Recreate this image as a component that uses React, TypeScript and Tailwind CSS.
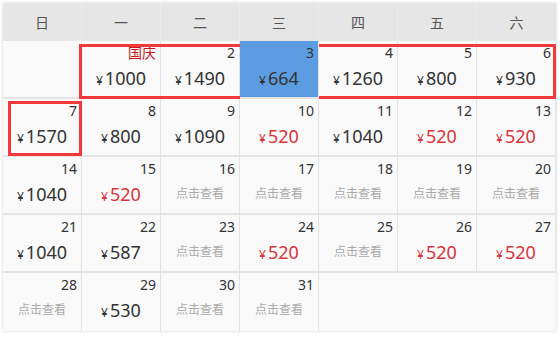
import React from 'react'

type Day = { d: number; label?: string; price?: number; low?: boolean; sel?: boolean }

const weekNames = ['日', '一', '二', '三', '四', '五', '六']

const days: Day[] = [
  { d: 1, label: '国庆', price: 1000 },
  { d: 2, price: 1490 },
  { d: 3, price: 664, sel: true },
  { d: 4, price: 1260 },
  { d: 5, price: 800 },
  { d: 6, price: 930 },
  { d: 7, price: 1570 },
  { d: 8, price: 800 },
  { d: 9, price: 1090 },
  { d: 10, price: 520, low: true },
  { d: 11, price: 1040 },
  { d: 12, price: 520, low: true },
  { d: 13, price: 520, low: true },
  { d: 14, price: 1040 },
  { d: 15, price: 520, low: true },
  { d: 16 },
  { d: 17 },
  { d: 18 },
  { d: 19 },
  { d: 20 },
  { d: 21, price: 1040 },
  { d: 22, price: 587 },
  { d: 23 },
  { d: 24, price: 520, low: true },
  { d: 25 },
  { d: 26, price: 520, low: true },
  { d: 27, price: 520, low: true },
  { d: 28 },
  { d: 29, price: 530 },
  { d: 30 },
  { d: 31 },
]

function Cell({ day, last, tail }: { day?: Day; last: boolean; tail: boolean }) {
  const base = `h-[58px] ${tail ? '' : 'border-r border-[#e2e2e2]'} ${last ? '' : 'border-b-2 border-b-[#e4e4e4]'}`
  if (!day) return <div className={`${base} bg-[#f9f9f9]`} />
  return (
    <div className={`${base} flex flex-col pt-[4px] ${day.sel ? 'relative z-10 bg-[#5b9de0]' : 'bg-[#f9f9f9]'}`}>
      <div className={`h-[16px] pr-[4px] text-right leading-[16px] ${day.label ? 'text-[14px] text-[#c8161d]' : 'text-[14px] text-[#333]'}`}>
        {day.label ?? day.d}
      </div>
      <div className="mt-[5px] flex h-[24px] items-center justify-center">
        {day.price ? (
          <span className={`flex items-baseline ${day.low ? 'text-[#d8343b]' : 'text-[#333]'}`}>
            <span className="mr-[2px] text-[12px]">¥</span>
            <span className="text-[18px] leading-[24px]">{day.price}</span>
          </span>
        ) : (
          <span className="text-[12px] text-[#aaa]">点击查看</span>
        )}
      </div>
    </div>
  )
}

export default function App() {
  const cells: (Day | undefined)[] = [undefined, ...days]
  while (cells.length < 35) cells.push(undefined)

  return (
    <div className="h-[337px] w-[560px] bg-white pt-[3px] pl-[3px]" style={{ fontFamily: '"Noto Sans", "Noto Sans CJK SC", sans-serif' }}>
      <div className="relative w-[553px] bg-[#f9f9f9] shadow-[0_0_3px_rgba(0,0,0,0.18)]">
        <div className="grid grid-cols-7 bg-[#e6e6e6]">
          {weekNames.map((w, i) => (
            <div key={w} className={`flex h-[38px] items-center justify-center text-[14px] text-[#555] ${i < 6 ? 'border-r border-[#ececec]' : ''}`}>
              {w}
            </div>
          ))}
        </div>
        <div className="grid grid-cols-7">
          {cells.map((c, i) => (
            <Cell key={i} day={c} last={i >= 28} tail={i > 31} />
          ))}
        </div>
        {/* 选中范围框 */}
        <div className="pointer-events-none absolute top-[41px] left-[76px] h-[55px] w-[477px] border-[3px] border-[#f33a3a]" />
        <div className="pointer-events-none absolute top-[98px] left-[5px] h-[55px] w-[74px] border-[3px] border-[#f33a3a]" />
      </div>
    </div>
  )
}
